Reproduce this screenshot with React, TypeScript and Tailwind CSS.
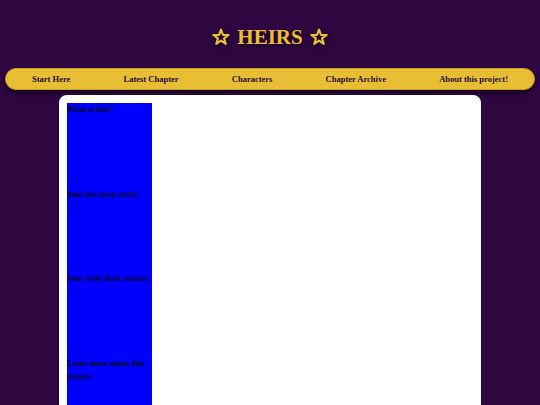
const NAV = ['Start Here', 'Latest Chapter', 'Characters', 'Chapter Archive', 'About this project!']

const LINKS = [
  'What is this?',
  'Start the main story!',
  'Start with short stories!',
  'Learn more about this project',
]

function Star() {
  return (
    <svg width="18" height="18" viewBox="0 0 24 24" className="drop-shadow-[1px_2px_2px_rgba(0,0,0,0.6)]">
      <polygon
        points="12,2 14.6,9.2 22.2,9.3 16.1,13.9 18.3,21.2 12,16.9 5.7,21.2 7.9,13.9 1.8,9.3 9.4,9.2"
        fill="none"
        stroke="#e9bf37"
        strokeWidth="2.8"
        strokeLinejoin="round"
      />
    </svg>
  )
}

export default function App() {
  return (
    <div className="h-[405px] bg-[#2e0741] font-['Liberation_Serif',serif] overflow-hidden">
      <header className="flex items-center justify-center h-[68px] pt-[6px]">
        <h1 className="flex items-center gap-[7px] text-[21px] font-bold leading-[30px] text-[#e9bf37] [text-shadow:1px_2px_3px_rgba(0,0,0,0.6)]">
          <Star />
          <span>HEIRS</span>
          <Star />
        </h1>
      </header>

      <nav className="mx-[5px] h-[22px] rounded-full bg-[#e8be35] border border-[#c99c20] shadow-[0_3px_4px_rgba(0,0,0,0.55)] flex items-center justify-between px-[26px]">
        {NAV.map((n) => (
          <a key={n} className="text-[8.5px] font-bold text-[#2a0b33] leading-none">
            {n}
          </a>
        ))}
      </nav>

      <main className="mx-auto mt-[5px] w-[422px] h-[330px] bg-white rounded-t-[8px] pt-[8px] px-[8px]">
        <div className="w-[85px] h-full bg-[#0000ff]">
          {LINKS.map((l) => (
            <div key={l} className="h-[84.5px] text-[8.8px] leading-[13px] text-[#0a0a30] [text-shadow:0_0_1px_rgba(0,0,0,0.9)]">
              {l}
            </div>
          ))}
        </div>
      </main>
    </div>
  )
}
